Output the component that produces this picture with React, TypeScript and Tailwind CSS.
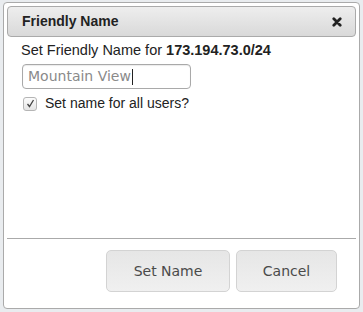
export default function App() {
  return (
    <div
      className="w-[363px] h-[312px] bg-[#e9ecef] pt-[2px] pl-[3px] pr-[3px]"
      style={{ fontFamily: '"Liberation Sans", Arial, sans-serif' }}
    >
      <div className="h-[307px] flex flex-col bg-white border border-[#aaaaaa] rounded-[4px] p-[3px]">
        <div className="h-[31px] flex items-center justify-between pl-[14px] pr-[13px] border border-[#aaaaaa] rounded-[4px] bg-gradient-to-b from-[#eeeeee] to-[#d9d9d9]">
          <span className="text-[14px] font-bold text-[#222222]">Friendly Name</span>
          <svg width="10" height="10" viewBox="0 0 10 10">
            <path d="M1.8 1.8 L8.2 8.2 M8.2 1.8 L1.8 8.2" stroke="#222" strokeWidth="2.8" strokeLinecap="round" />
          </svg>
        </div>
        <div className="flex-1 px-[14px] pt-[5px] text-[14px] text-[#222222]">
          <div className="leading-[17px] text-[14.5px]">
            Set Friendly Name for <b>173.194.73.0/24</b>
          </div>
          <div
            className="mt-[5px] ml-px w-[169px] h-[25px] border border-[#a9a9a9] rounded-[4px] flex items-center px-[5px] text-[14px] text-[#8a8a8a] shadow-[inset_0_1px_1px_rgba(0,0,0,0.08)]"
            style={{ fontFamily: '"DejaVu Sans", Verdana, sans-serif' }}
          >
            Mountain View<span className="w-px h-[16px] bg-[#222] ml-px" />
          </div>
          <label className="mt-[4px] flex items-center gap-[8px]">
            <span className="ml-[2px] w-[14px] h-[14px] rounded-[3px] border border-[#b5b5b5] bg-gradient-to-b from-[#fcfcfc] to-[#e4e4e4] flex items-center justify-center">
              <svg width="9" height="9" viewBox="0 0 9 9">
                <path d="M1.5 5 L3.5 7.5 L7.5 1" stroke="#444" strokeWidth="1.3" fill="none" />
              </svg>
            </span>
            <span>Set name for all users?</span>
          </label>
        </div>
        <div
          className="border-t border-[#aaaaaa] h-[67px] flex items-start justify-end gap-[6px] pt-[11px] pr-[19px]"
          style={{ fontFamily: '"DejaVu Sans", Verdana, sans-serif' }}
        >
          <button className="w-[124px] h-[42px] rounded-[5px] border border-[#d3d3d3] bg-gradient-to-b from-[#e6e6e6] to-[#f0f0f0] text-[14px] text-[#4a4a4a]">
            Set Name
          </button>
          <button className="w-[101px] h-[42px] rounded-[5px] border border-[#d3d3d3] bg-gradient-to-b from-[#e6e6e6] to-[#f0f0f0] text-[14px] text-[#4a4a4a]">
            Cancel
          </button>
        </div>
      </div>
    </div>
  );
}
